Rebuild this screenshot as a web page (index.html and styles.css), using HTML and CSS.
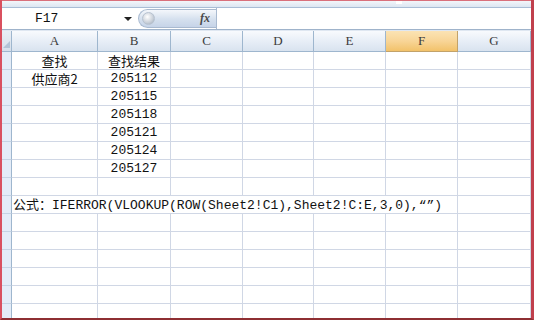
FILE: index.html
```html
<!DOCTYPE html>
<html>
<head>
<meta charset="utf-8">
<link rel="stylesheet" href="styles.css">
</head>
<body>
<div class="window">
  <div class="topband"><span class="grip"></span></div>
  <div class="fbar">
    <div class="namebox"><span class="ref">F17</span><span class="arrow"></span></div>
    <div class="pill"><span class="knob"></span><span class="fx">fx</span></div>
    <div class="finput"></div>
  </div>
  <div class="gap"></div>
  <div class="sheet">
    <div class="corner"><span class="tri"></span></div>
    <div class="h">A</div><div class="h">B</div><div class="h">C</div><div class="h">D</div><div class="h">E</div><div class="h sel">F</div><div class="h">G</div>

    <div class="rh"></div><div class="c ctr"><span class="cjk">查找</span></div><div class="c ctr"><span class="cjk">查找结果</span></div><div class="c"></div><div class="c"></div><div class="c"></div><div class="c"></div><div class="c"></div>
    <div class="rh"></div><div class="c ctr"><span class="cjk">供应商2</span></div><div class="c ctr">205112</div><div class="c"></div><div class="c"></div><div class="c"></div><div class="c"></div><div class="c"></div>
    <div class="rh"></div><div class="c"></div><div class="c ctr">205115</div><div class="c"></div><div class="c"></div><div class="c"></div><div class="c"></div><div class="c"></div>
    <div class="rh"></div><div class="c"></div><div class="c ctr">205118</div><div class="c"></div><div class="c"></div><div class="c"></div><div class="c"></div><div class="c"></div>
    <div class="rh"></div><div class="c"></div><div class="c ctr">205121</div><div class="c"></div><div class="c"></div><div class="c"></div><div class="c"></div><div class="c"></div>
    <div class="rh"></div><div class="c"></div><div class="c ctr">205124</div><div class="c"></div><div class="c"></div><div class="c"></div><div class="c"></div><div class="c"></div>
    <div class="rh"></div><div class="c"></div><div class="c ctr">205127</div><div class="c"></div><div class="c"></div><div class="c"></div><div class="c"></div><div class="c"></div>
    <div class="rh"></div><div class="c"></div><div class="c"></div><div class="c"></div><div class="c"></div><div class="c"></div><div class="c"></div><div class="c"></div>
    <div class="rh"></div><div class="c formula"><span class="v"><span class="cjk">公式：</span>IFERROR(VLOOKUP(ROW(Sheet2!C1),Sheet2!C:E,3,0),“”)</span></div><div class="c"></div>
    <div class="rh"></div><div class="c"></div><div class="c"></div><div class="c"></div><div class="c"></div><div class="c"></div><div class="c"></div><div class="c"></div>
    <div class="rh"></div><div class="c"></div><div class="c"></div><div class="c"></div><div class="c"></div><div class="c"></div><div class="c"></div><div class="c"></div>
    <div class="rh"></div><div class="c"></div><div class="c"></div><div class="c"></div><div class="c"></div><div class="c"></div><div class="c"></div><div class="c"></div>
    <div class="rh"></div><div class="c"></div><div class="c"></div><div class="c"></div><div class="c"></div><div class="c"></div><div class="c"></div><div class="c"></div>
    <div class="rh"></div><div class="c"></div><div class="c"></div><div class="c"></div><div class="c"></div><div class="c"></div><div class="c"></div><div class="c"></div>
    <div class="rh"></div><div class="c"></div><div class="c"></div><div class="c"></div><div class="c"></div><div class="c"></div><div class="c"></div><div class="c"></div>
  </div>
</div>
</body>
</html>
```

FILE: styles.css
```css
html, body {
  margin: 0;
  padding: 0;
  background: #ffffff;
}
.window {
  width: 534px;
  height: 320px;
  box-sizing: border-box;
  border-left: 2px solid #d9505f;
  border-right: 3px solid #c0404d;
  border-bottom: 2px solid #8e2f33;
  overflow: hidden;
  display: flex;
  flex-direction: column;
  background: #ffffff;
}
.topband {
  height: 8px;
  flex: none;
  box-sizing: border-box;
  border-top: 1px solid #d9707c;
  border-bottom: 1px solid #a9bdd6;
  background: linear-gradient(#f3f6fa, #dce6f2);
  position: relative;
}
.grip {
  position: absolute;
  left: 394px;
  top: 0;
  width: 6px;
  height: 3px;
  background: #ffffff;
}
.fbar {
  height: 22px;
  flex: none;
  display: flex;
  box-sizing: border-box;
  border-bottom: 1px solid #9fb3cb;
  background: #ffffff;
}
.namebox {
  width: 136px;
  flex: none;
  display: flex;
  align-items: center;
  position: relative;
}
.ref {
  font-family: "Liberation Mono", monospace;
  font-size: 13px;
  color: #111;
  margin-left: 33px;
}
.arrow {
  position: absolute;
  left: 122px;
  top: 9px;
  width: 0;
  height: 0;
  border-left: 4px solid transparent;
  border-right: 4px solid transparent;
  border-top: 4px solid #222;
}
.pill {
  width: 78px;
  flex: none;
  margin: 1px 0;
  box-sizing: border-box;
  border: 1px solid #a9bad0;
  border-right: none;
  border-radius: 10px 0 0 10px;
  background: linear-gradient(#f4f7fb, #d5e0ee 55%, #c6d4e8);
  display: flex;
  align-items: center;
  justify-content: space-between;
  padding: 0 6px 0 3px;
}
.knob {
  width: 11px;
  height: 11px;
  border-radius: 50%;
  background: radial-gradient(circle at 40% 35%, #ffffff, #c8cfd8 60%, #9aa5b3);
  border: 1px solid #b7c2d0;
}
.fx {
  font-family: "Liberation Serif", serif;
  font-style: italic;
  font-weight: bold;
  font-size: 12px;
  color: #4a4a4a;
}
.finput {
  flex: 1;
  border-left: 1px solid #a9bad0;
  background: #ffffff;
}
.gap {
  height: 1px;
  flex: none;
  background: #dfe7f1;
}
.sheet {
  display: grid;
  grid-template-columns: 10px 86px 73px 72px 71px 72px 72px 73px;
  grid-template-rows: 21px;
  grid-auto-rows: 18px;
}
.corner {
  box-sizing: border-box;
  border-right: 1px solid #9eb6ce;
  border-bottom: 1px solid #9eb6ce;
  background: linear-gradient(#e9eef5, #d6dfea);
  position: relative;
}
.tri {
  position: absolute;
  right: 1px;
  bottom: 3px;
  width: 0;
  height: 0;
  border-left: 7px solid transparent;
  border-bottom: 7px solid #b3c3d6;
}
.h {
  box-sizing: border-box;
  border-right: 1px solid #9eb6ce;
  border-bottom: 1px solid #9eb6ce;
  background: linear-gradient(#f8fafd, #e6edf6 55%, #d9e3ef);
  font-family: "Liberation Serif", serif;
  font-size: 13px;
  color: #3b3b3b;
  text-align: center;
  line-height: 20px;
}
.h.sel {
  background: linear-gradient(#fbe3b4, #f8d597 50%, #f2c26a);
  border-right-color: #c2a26a;
  border-bottom-color: #c2a26a;
}
.rh {
  box-sizing: border-box;
  border-right: 1px solid #9eb6ce;
  border-bottom: 1px solid #c5d3e3;
  background: #e4ecf7;
}
.c {
  box-sizing: border-box;
  border-right: 1px solid #d0d7e5;
  border-bottom: 1px solid #d0d7e5;
  font-family: "Liberation Mono", monospace;
  font-size: 13px;
  color: #111;
  white-space: nowrap;
  display: flex;
  align-items: center;
}
.ctr {
  justify-content: center;
}
.v {
  line-height: 16px;
}
.cjk {
  font-family: "Noto Sans CJK SC", sans-serif;
  font-size: 13px;
  line-height: 16px;
}
.formula {
  grid-column: 2 / span 6;
  padding-left: 1px;
}
```
